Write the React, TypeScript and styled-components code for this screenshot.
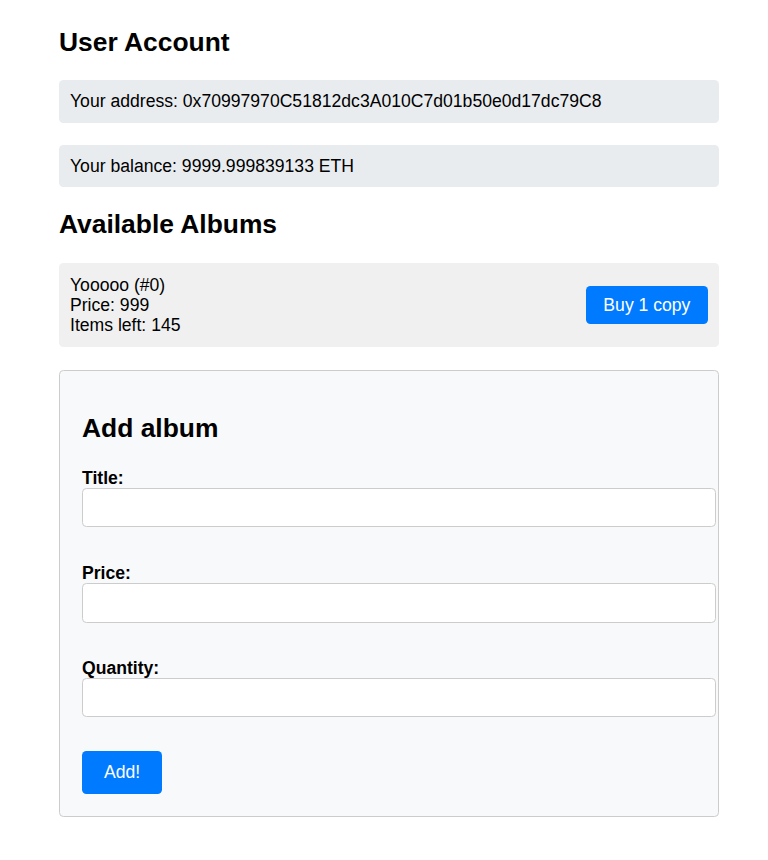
import React from "react";
import styled, { createGlobalStyle } from "styled-components";

const GlobalStyle = createGlobalStyle`
  html, body {
    margin: 0;
    padding: 0;
    background: #ffffff;
  }
  body {
    font-family: "Liberation Sans", Arial, sans-serif;
    color: #000000;
    font-size: 17.6px;
  }
  * {
    font-family: "Liberation Sans", Arial, sans-serif;
  }
`;

const Page = styled.main`
  width: 660px;
  padding: 27px 0 40px 59px;
`;

const SectionTitle = styled.h2<{ $gap?: number }>`
  margin: 0 0 ${(p) => p.$gap ?? 23}px;
  font-size: 26.4px;
  font-weight: bold;
  line-height: 30.4px;
`;

const InfoBox = styled.div`
  background: #e9ecef;
  border-radius: 4.4px;
  padding: 11px;
  line-height: 20.2px;
  margin-bottom: 22px;
  font-size: 17.6px;
`;

const AlbumCard = styled.div`
  display: flex;
  align-items: center;
  justify-content: space-between;
  background: #f0f0f0;
  border-radius: 4.4px;
  padding: 12px 11px;
  margin-bottom: 23px;
`;

const AlbumInfo = styled.div`
  display: flex;
  flex-direction: column;
  font-size: 17.6px;
  line-height: 20px;
`;

const PrimaryButton = styled.button<{ $px?: number; $py?: number }>`
  background: #007bff;
  color: #ffffff;
  border: none;
  border-radius: 4.4px;
  font-size: 17.6px;
  line-height: 20.2px;
  padding: ${(p) => p.$py ?? 8.8}px ${(p) => p.$px ?? 17.6}px;
  cursor: pointer;
`;

const FormPanel = styled.form`
  background: #f8f9fa;
  border: 1px solid #cccccc;
  border-radius: 4.4px;
  padding: 22px;
`;

const FormTitle = styled.h3`
  margin: 20px 0 24px;
  font-size: 26.4px;
  font-weight: bold;
  line-height: 30.4px;
`;

const FieldGroup = styled.div<{ $gap: number }>`
  margin-bottom: ${(p) => p.$gap}px;
`;

const FieldLabel = styled.label`
  display: block;
  font-weight: bold;
  font-size: 17.6px;
  line-height: 20px;
`;

const TextInput = styled.input`
  display: block;
  box-sizing: content-box;
  width: 100%;
  height: 20px;
  padding: 8.8px;
  border: 1px solid #cccccc;
  border-radius: 4.4px;
  background: #ffffff;
  font-size: 17.6px;
  outline: none;
`;

const fields = [
  { label: "Title:", gap: 36 },
  { label: "Price:", gap: 35 },
  { label: "Quantity:", gap: 34 },
];

export default function App() {
  return (
    <>
      <GlobalStyle />
      <Page>
        <SectionTitle>User Account</SectionTitle>
        <InfoBox>Your address: 0x70997970C51812dc3A010C7d01b50e0d17dc79C8</InfoBox>
        <InfoBox>Your balance: 9999.999839133 ETH</InfoBox>
        <SectionTitle $gap={24}>Available Albums</SectionTitle>
        <AlbumCard>
          <AlbumInfo>
            <span>Yooooo (#0)</span>
            <span>Price: 999</span>
            <span>Items left: 145</span>
          </AlbumInfo>
          <PrimaryButton type="button">Buy 1 copy</PrimaryButton>
        </AlbumCard>
        <FormPanel onSubmit={(e) => e.preventDefault()}>
          <FormTitle>Add album</FormTitle>
          {fields.map((f) => (
            <FieldGroup key={f.label} $gap={f.gap}>
              <FieldLabel>{f.label}</FieldLabel>
              <TextInput type="text" />
            </FieldGroup>
          ))}
          <PrimaryButton type="submit" $px={22} $py={11}>
            Add!
          </PrimaryButton>
        </FormPanel>
      </Page>
    </>
  );
}
